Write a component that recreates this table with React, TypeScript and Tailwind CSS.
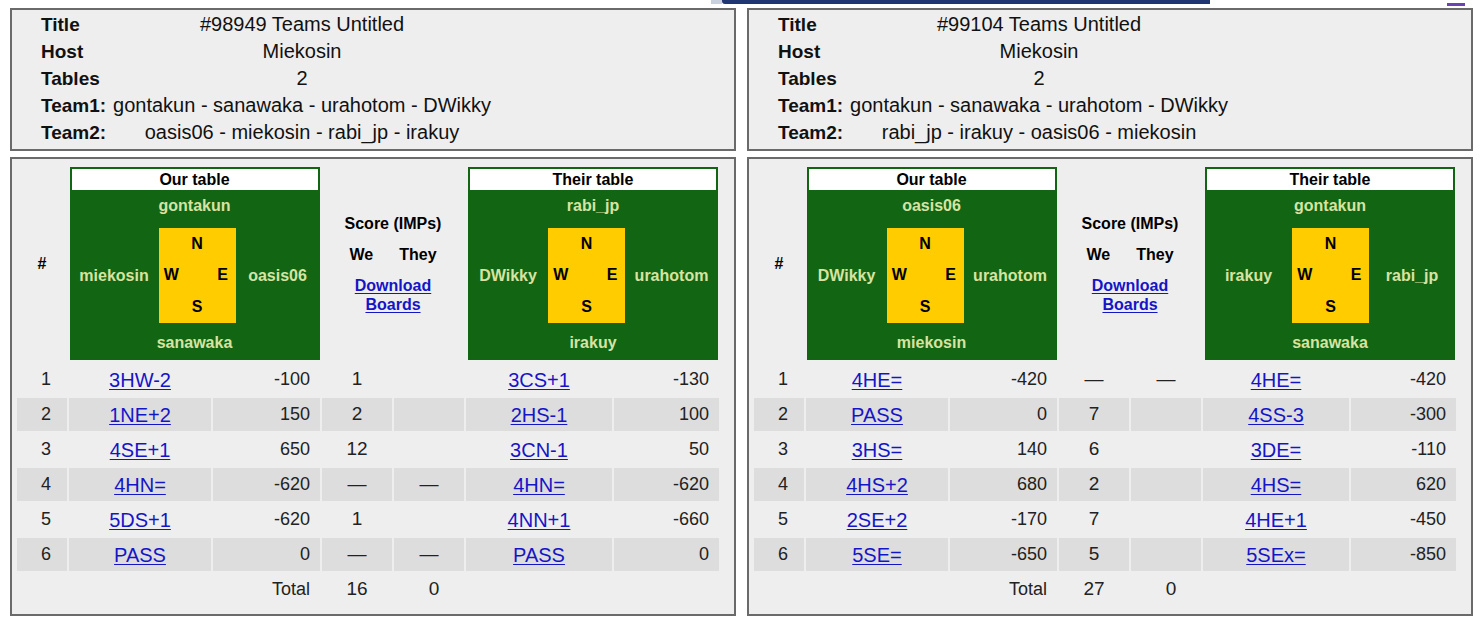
import React from "react";

type Row = [string, string, string, string, string, string, string];

type Seat = { n: string; w: string; e: string; s: string; wc: number };

type PanelData = {
  title: string;
  host: string;
  tables: string;
  team1: string;
  team2: string;
  our: Seat;
  their: Seat;
  rows: Row[];
  totalWe: string;
  totalThey: string;
};

const panels: PanelData[] = [
  {
    title: "#98949 Teams Untitled",
    host: "Miekosin",
    tables: "2",
    team1: "gontakun - sanawaka - urahotom - DWikky",
    team2: "oasis06 - miekosin - rabi_jp - irakuy",
    our: { n: "gontakun", w: "miekosin", e: "oasis06", s: "sanawaka", wc: 89 },
    their: { n: "rabi_jp", w: "DWikky", e: "urahotom", s: "irakuy", wc: 80 },
    rows: [
      ["1", "3HW-2", "-100", "1", "", "3CS+1", "-130"],
      ["2", "1NE+2", "150", "2", "", "2HS-1", "100"],
      ["3", "4SE+1", "650", "12", "", "3CN-1", "50"],
      ["4", "4HN=", "-620", "—", "—", "4HN=", "-620"],
      ["5", "5DS+1", "-620", "1", "", "4NN+1", "-660"],
      ["6", "PASS", "0", "—", "—", "PASS", "0"],
    ],
    totalWe: "16",
    totalThey: "0",
  },
  {
    title: "#99104 Teams Untitled",
    host: "Miekosin",
    tables: "2",
    team1: "gontakun - sanawaka - urahotom - DWikky",
    team2: "rabi_jp - irakuy - oasis06 - miekosin",
    our: { n: "oasis06", w: "DWikky", e: "urahotom", s: "miekosin", wc: 80 },
    their: { n: "gontakun", w: "irakuy", e: "rabi_jp", s: "sanawaka", wc: 87 },
    rows: [
      ["1", "4HE=", "-420", "—", "—", "4HE=", "-420"],
      ["2", "PASS", "0", "7", "", "4SS-3", "-300"],
      ["3", "3HS=", "140", "6", "", "3DE=", "-110"],
      ["4", "4HS+2", "680", "2", "", "4HS=", "620"],
      ["5", "2SE+2", "-170", "7", "", "4HE+1", "-450"],
      ["6", "5SE=", "-650", "5", "", "5SEx=", "-850"],
    ],
    totalWe: "27",
    totalThey: "0",
  },
];

function Compass({ title, p }: { title: string; p: Seat }) {
  return (
    <div className="w-[250px] h-[193px] bg-[#126512] flex flex-col font-bold text-[16px] leading-[18px]">
      <div className="mx-[2px] mt-[2px] h-[21px] bg-white text-black text-center leading-[21px]">
        {title}
      </div>
      <div className="h-[38px] flex justify-center pt-[7px] text-[#d8e3a2]">{p.n}</div>
      <div className="h-[95px] flex">
        <div
          className="flex items-center justify-center text-[#d8e3a2] shrink-0"
          style={{ width: p.wc }}
        >
          {p.w}
        </div>
        <div className="w-[77px] shrink-0 bg-[#ffcc00] grid grid-cols-3 grid-rows-3 text-black">
          <span className="col-start-2 row-start-1 flex items-center justify-center">N</span>
          <span className="col-start-1 row-start-2 flex items-center justify-center">W</span>
          <span className="col-start-3 row-start-2 flex items-center justify-center">E</span>
          <span className="col-start-2 row-start-3 flex items-center justify-center">S</span>
        </div>
        <div className="flex-1 flex items-center justify-center text-[#d8e3a2]">{p.e}</div>
      </div>
      <div className="h-[37px] flex items-center justify-center pt-[2px] text-[#d8e3a2]">{p.s}</div>
    </div>
  );
}

const linkCls = "text-[#1515c8] underline underline-offset-[2px] decoration-[1px]";

function Panel({ d }: { d: PanelData }) {
  const labelCls = "font-bold text-[19px] leading-[27px] h-[27px]";
  const valCls = "text-[20px] leading-[27px] h-[27px] text-center whitespace-nowrap";
  return (
    <div className="w-[726px] flex flex-col">
      <div className="border-2 border-[#6a6a6a] bg-[#eeeeee] h-[143px] pl-[29px] pt-[1px]">
        <div className="grid grid-cols-[72px_378px] text-[#111]">
          <div className={labelCls}>Title</div>
          <div className={valCls}>{d.title}</div>
          <div className={labelCls}>Host</div>
          <div className={valCls}>{d.host}</div>
          <div className={labelCls}>Tables</div>
          <div className={valCls}>{d.tables}</div>
          <div className={labelCls}>Team1:</div>
          <div className={valCls}>{d.team1}</div>
          <div className={labelCls}>Team2:</div>
          <div className={valCls}>{d.team2}</div>
        </div>
      </div>
      <div className="mt-[6px] border-2 border-[#6a6a6a] bg-[#eeeeee] h-[459px] pl-[5px] pt-[7px]">
        <div className="grid grid-cols-[50px_142px_107px_70px_70px_146px_105px] grid-rows-[195px_repeat(7,33px)] gap-[2px] text-[#222]">
          <div className="flex items-center justify-center font-bold text-[16px] text-black">#</div>
          <div className="col-span-2 flex items-center justify-center">
            <Compass title="Our table" p={d.our} />
          </div>
          <div className="col-span-2 flex flex-col items-center justify-center font-bold text-[16px] leading-[19px] text-black">
            <div>Score (IMPs)</div>
            <div className="mt-[12px] flex gap-[26px]">
              <span>We</span>
              <span>They</span>
            </div>
            <a href="#" className={"mt-[12px] text-center " + linkCls}>
              Download
              <br />
              Boards
            </a>
          </div>
          <div className="col-span-2 flex items-center justify-center pl-[1px]">
            <Compass title="Their table" p={d.their} />
          </div>
          {d.rows.map((r, i) => {
            const bg = i % 2 === 1 ? "bg-[#dddddd]" : "";
            return (
              <React.Fragment key={i}>
                <div className={"flex items-center justify-center pl-[8px] text-[18px] " + bg}>{r[0]}</div>
                <div className={"flex items-center justify-center text-[20px] " + bg}>
                  <a href="#" className={linkCls}>{r[1]}</a>
                </div>
                <div className={"flex items-center justify-end pr-[10px] text-[18px] " + bg}>{r[2]}</div>
                <div className={"flex items-center justify-center text-[19px] " + bg}>{r[3]}</div>
                <div className={"flex items-center justify-center text-[19px] " + bg}>{r[4]}</div>
                <div className={"flex items-center justify-center text-[20px] " + bg}>
                  <a href="#" className={linkCls}>{r[5]}</a>
                </div>
                <div className={"flex items-center justify-end pr-[10px] text-[18px] " + bg}>{r[6]}</div>
              </React.Fragment>
            );
          })}
          <div />
          <div />
          <div className="flex items-center justify-end pr-[10px] text-[18px]">Total</div>
          <div className="flex items-center justify-center text-[19px]">{d.totalWe}</div>
          <div className="flex items-center justify-center pl-[10px] text-[19px]">{d.totalThey}</div>
          <div />
          <div />
        </div>
      </div>
    </div>
  );
}

export default function App() {
  return (
    <div className="w-[1480px] h-[622px] bg-white overflow-hidden font-['Liberation_Sans',Arial,sans-serif]">
      <div className="h-[8px] flex items-start">
        <div className="w-[711px]" />
        <div className="w-[11px] h-[4px] bg-[#c9d0de]" />
        <div className="w-[488px] h-[4px] bg-[#1f3672] rounded-bl-[3px]" />
        <div className="w-[237px]" />
        <div className="w-[18px] h-[3px] mt-[3px] bg-[#6b41b8]" />
      </div>
      <div className="flex pl-[10px] gap-[11px]">
        {panels.map((p, i) => (
          <Panel key={i} d={p} />
        ))}
      </div>
    </div>
  );
}
